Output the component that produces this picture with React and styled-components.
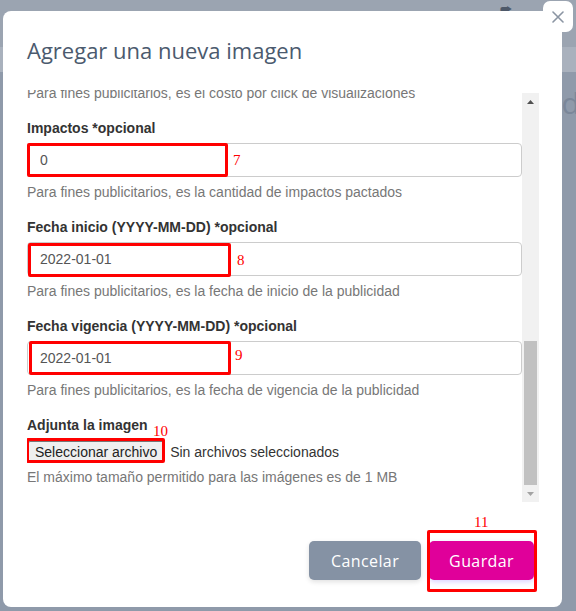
import React, { useLayoutEffect, useRef } from "react";
import styled, { createGlobalStyle } from "styled-components";

const GlobalStyle = createGlobalStyle`
	html, body {
		margin: 0;
		padding: 0;
		height: 100%;
		overflow: hidden;
	}
	body {
		font-family: "Liberation Sans", Arial, sans-serif;
	}
`;

const Backdrop = styled.div`
	position: fixed;
	inset: 0;
	background: #8f9aaa;
	display: flex;
	flex-direction: column;
	overflow: hidden;
	.topbar {
		height: 45px;
		background: #9ba4b1;
		display: flex;
		justify-content: flex-end;
		align-items: flex-start;
		padding: 2px 64px 0 0;
		color: #4e5969;
		font-size: 13px;
	}
	.band {
		height: 25px;
		background: #a9b1bd;
	}
	.heading {
		display: flex;
		justify-content: flex-end;
		margin-top: 10px;
		margin-right: -22px;
		font-family: "Open Sans", sans-serif;
		font-size: 30px;
		color: #7b8799;
	}
`;

const Modal = styled.div`
	position: fixed;
	left: 3px;
	top: 11px;
	width: 559px;
	height: 596px;
	background: #fff;
	border-radius: 8px;
	display: flex;
	flex-direction: column;
	box-sizing: border-box;
`;

const CloseButton = styled.button`
	position: absolute;
	top: -10px;
	right: -11px;
	width: 30px;
	height: 31px;
	border: none;
	border-radius: 7px;
	background: #fff;
	display: grid;
	place-content: center;
	padding: 0;
	cursor: pointer;
`;

const Title = styled.h2`
	margin: 24px 24px 0;
	font-family: "Open Sans", sans-serif;
	font-weight: 400;
	font-size: 22px;
	line-height: 30px;
	color: #4b5a6e;
`;

const Body = styled.div`
	margin: 25px 23px 0 24px;
	height: 412px;
	display: flex;
`;

const Scroller = styled.div`
	flex: 1;
	overflow: hidden;
`;

const ScrollBar = styled.div`
	width: 17px;
	margin-top: 3px;
	background: #f1f1f1;
	display: flex;
	flex-direction: column;
	.arrow {
		height: 17px;
		display: grid;
		place-content: center;
	}
	.track {
		flex: 1;
		display: flex;
		flex-direction: column;
		justify-content: flex-end;
	}
	.thumb {
		height: 144px;
		margin: 0 2px 0;
		background: #c1c1c1;
	}
`;

const Group = styled.div`
	margin-bottom: 15px;
`;

const Label = styled.label`
	display: block;
	font-weight: bold;
	font-size: 14px;
	line-height: 20px;
	color: #333;
	margin-bottom: 5px;
`;

const Field = styled.div`
	position: relative;
`;

const Input = styled.input`
	display: block;
	width: 100%;
	height: 34px;
	box-sizing: border-box;
	padding: 6px 12px;
	font-family: "Liberation Sans", Arial, sans-serif;
	font-size: 14px;
	color: #555;
	border: 1px solid #ccc;
	border-radius: 4px;
	outline: none;
	background: #fff;
`;

const Help = styled.p`
	margin: 5px 0 0;
	font-size: 14px;
	line-height: 20px;
	color: #777;
`;

const FileRow = styled.div`
	position: relative;
	display: flex;
	align-items: center;
	gap: 6px;
	margin-top: 6px;
	font-size: 14px;
	color: #333;
`;

const FileButton = styled.button`
	height: 21px;
	padding: 0 6px;
	margin-left: 1px;
	font-family: "Liberation Sans", Arial, sans-serif;
	font-size: 14px;
	color: #222;
	background: #efefef;
	border: 1px solid #767676;
	border-radius: 2px;
`;

const Mark = styled.div`
	position: absolute;
	left: ${(p) => p.$x}px;
	top: ${(p) => p.$y}px;
	width: ${(p) => p.$w}px;
	height: ${(p) => p.$h}px;
	border: 3px solid #f00;
	box-sizing: border-box;
	border-radius: 2px;
	pointer-events: none;
`;

const MarkNumber = styled.span`
	position: absolute;
	left: ${(p) => p.$x}px;
	top: ${(p) => p.$y}px;
	font-family: "Liberation Serif", "Times New Roman", serif;
	font-size: 15px;
	line-height: 15px;
	color: #f00;
`;

const Footer = styled.div`
	position: relative;
	display: flex;
	justify-content: flex-end;
	gap: 8px;
	padding: 39px 28px 27px 0;
`;

const Button = styled.button`
	height: 39px;
	padding: 0 ${(p) => (p.$primary ? 20 : 22)}px;
	border: none;
	border-radius: 5px;
	font-family: "Open Sans", sans-serif;
	font-size: 16px;
	font-weight: 500;
	letter-spacing: 0.4px;
	color: #fff;
	background: ${(p) => (p.$primary ? "#e0009a" : "#8592a4")};
	box-shadow: 0 2px 5px ${(p) => (p.$primary ? "rgba(120, 80, 255, 0.25)" : "rgba(0, 0, 0, 0.12)")};
	cursor: pointer;
`;

const earlierFields = [
	{ label: "Nombre de la imagen", value: "Banner principal", help: "Nombre con el que se identificará la imagen" },
	{ label: "Descripción *opcional", value: "", help: "Breve descripción de la imagen" },
	{ label: "URL de destino *opcional", value: "https://", help: "Dirección a la que se redirige al dar click" },
	{ label: "Posición", value: "1", help: "Orden en el que se mostrará la imagen" },
	{ label: "Costo por impresión *opcional", value: "0", help: "Para fines publicitarios, es el costo por impresión" },
	{ label: "Costo por click *opcional", value: "0", help: "Para fines publicitarios, es el costo por click de visualizaciones" },
];

const fields = [
	{
		label: "Impactos *opcional",
		value: "0",
		help: "Para fines publicitarios, es la cantidad de impactos pactados",
		mark: { x: 0, y: 0, w: 201, h: 34, nx: 206, ny: 10, n: "7" },
	},
	{
		label: "Fecha inicio (YYYY-MM-DD) *opcional",
		value: "2022-01-01",
		help: "Para fines publicitarios, es la fecha de inicio de la publicidad",
		mark: { x: 1, y: 1, w: 203, h: 34, nx: 210, ny: 11, n: "8" },
	},
	{
		label: "Fecha vigencia (YYYY-MM-DD) *opcional",
		value: "2022-01-01",
		help: "Para fines publicitarios, es la fecha de vigencia de la publicidad",
		mark: { x: 2, y: 0, w: 202, h: 34, nx: 208, ny: 7, n: "9" },
	},
];

const Arrow = ({ up, color }) => (
	<svg width="7" height="4" viewBox="0 0 7 4">
		<path d={up ? "M0 4 L3.5 0 L7 4 Z" : "M0 0 L7 0 L3.5 4 Z"} fill={color} />
	</svg>
);

const App = () => {
	const scrollRef = useRef();

	useLayoutEffect(() => {
		const el = scrollRef.current;
		el.scrollTop = el.scrollHeight;
	}, []);

	return (
		<>
			<GlobalStyle />
			<Backdrop>
				<div className="topbar">⮫</div>
				<div className="band" />
				<div className="heading">Listado</div>
			</Backdrop>
			<Modal>
				<CloseButton aria-label="Cerrar">
					<svg width="12" height="12" viewBox="0 0 12 12">
						<path d="M1 1 L11 11 M11 1 L1 11" stroke="#8b95a3" strokeWidth="1.6" strokeLinecap="round" />
					</svg>
				</CloseButton>
				<Title>Agregar una nueva imagen</Title>
				<Body>
					<Scroller ref={scrollRef}>
						{earlierFields.map((f) => (
							<Group key={f.label}>
								<Label>{f.label}</Label>
								<Input defaultValue={f.value} />
								<Help>{f.help}</Help>
							</Group>
						))}
						{fields.map((f) => (
							<Group key={f.label}>
								<Label>{f.label}</Label>
								<Field>
									<Input defaultValue={f.value} />
									<Mark $x={f.mark.x} $y={f.mark.y} $w={f.mark.w} $h={f.mark.h} />
									<MarkNumber $x={f.mark.nx} $y={f.mark.ny}>
										{f.mark.n}
									</MarkNumber>
								</Field>
								<Help>{f.help}</Help>
							</Group>
						))}
						<Group>
							<Label>Adjunta la imagen</Label>
							<FileRow>
								<FileButton type="button">Seleccionar archivo</FileButton>
								<span>Sin archivos seleccionados</span>
								<Mark $x={-1} $y={-3} $w={139} $h={25} />
								<MarkNumber $x={126} $y={-17}>
									10
								</MarkNumber>
							</FileRow>
							<Help>El máximo tamaño permitido para las imágenes es de 1 MB</Help>
						</Group>
					</Scroller>
					<ScrollBar>
						<div className="arrow">
							<Arrow up color="#505050" />
						</div>
						<div className="track">
							<div className="thumb" />
						</div>
						<div className="arrow">
							<Arrow color="#a3a3a3" />
						</div>
					</ScrollBar>
				</Body>
				<Footer>
					<Button type="button">Cancelar</Button>
					<Button type="button" $primary>
						Guardar
					</Button>
					<Mark $x={424} $y={28} $w={110} $h={62} />
					<MarkNumber $x={471} $y={13}>
						11
					</MarkNumber>
				</Footer>
			</Modal>
		</>
	);
};

export default App;
